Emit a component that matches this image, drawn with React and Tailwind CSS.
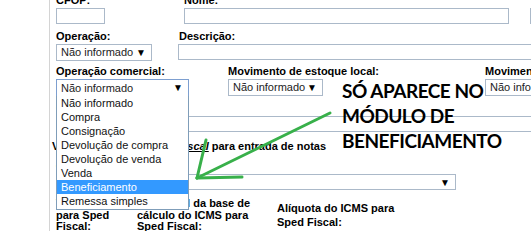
import React from "react";

const label = "block h-[13px] leading-[13px] text-[11px] font-bold text-black whitespace-nowrap";
const box = "mt-[1px] h-[16px] border border-[#abb9c9] bg-white";

function Select({ width, focused, tall }) {
  return (
    <div
      className={`mt-[1px] flex items-center justify-between bg-white pl-[4px] pr-[5px] text-[11px] leading-[13px] text-[#222] border ${
        focused ? "border-[#7d9fd0]" : "border-[#abb9c9]"
      } ${tall ? "h-[18px]" : "h-[17px]"} ${width}`}
    >
      <span className="whitespace-nowrap">Não informado</span>
      <span className="text-[10px] leading-[10px] text-black">▼</span>
    </div>
  );
}

function OptionList() {
  const options = [
    "Não informado",
    "Compra",
    "Consignação",
    "Devolução de compra",
    "Devolução de venda",
    "Venda",
    "Beneficiamento",
    "Remessa simples",
  ];
  return (
    <div className="absolute left-[56px] top-[96px] w-[133px] border border-t-0 border-[#7f9db9] bg-white pb-[1px] text-[11px] text-[#111]">
      {options.map((o) => (
        <div key={o} className={`h-[14px] leading-[14px] pl-[4px] whitespace-nowrap ${o === "Beneficiamento" ? "bg-[#3399ff] text-white" : ""}`}>
          {o}
        </div>
      ))}
    </div>
  );
}

function Annotation() {
  return (
    <>
      <div className="absolute left-[342px] top-[78px] font-['Lato',sans-serif] font-bold text-[19px] leading-[25px] tracking-[-0.5px] text-black whitespace-nowrap">
        <div>SÓ APARECE NO</div>
        <div>MÓDULO DE</div>
        <div>BENEFICIAMENTO</div>
      </div>
      <svg className="absolute left-0 top-0 pointer-events-none" width="531" height="231">
        <g stroke="#38b04a" strokeWidth="3" strokeLinecap="round" fill="none">
          <line x1="330" y1="113" x2="197" y2="178" />
          <line x1="197" y1="178" x2="206" y2="140" />
          <line x1="197" y1="178" x2="242" y2="177" />
        </g>
      </svg>
    </>
  );
}

export default function App() {
  return (
    <div className="relative flex h-[231px] w-[531px] overflow-hidden bg-white font-['Liberation_Sans',Arial,sans-serif]">
      <div className="w-[49px] shrink-0" />
      <div className="flex-1 border-l border-[#d4d4d4] pl-[6px]">
        {/* row 1 */}
        <div className="-mt-[6px] flex">
          <div className="w-[128px] shrink-0">
            <span className={label}>CFOP:</span>
            <div className={`${box} w-[49px]`} />
          </div>
          <div className="w-[346px] shrink-0">
            <span className={label}>Nome:</span>
            <div className={`${box} w-[325px]`} />
          </div>
          <div className="w-[20px] shrink-0">
            <div className="h-[3px] w-[3px] bg-[#f0a040]" />
            <div className="h-[10px]" />
            <div className={`${box} w-[20px]`} />
          </div>
        </div>

        {/* row 2 */}
        <div className="mt-[6px] flex">
          <div className="w-[122px] shrink-0">
            <span className={label}>Operação:</span>
            <Select width="w-[96px]" />
          </div>
          <div className="flex-1">
            <span className={`${label} pl-[1px]`}>Descrição:</span>
            <div className={`${box} w-[360px]`} />
          </div>
        </div>

        {/* row 3 */}
        <div className="mt-[4px] flex">
          <div className="w-[172px] shrink-0">
            <span className={label}>Operação comercial:</span>
            <Select width="w-[133px]" focused tall />
          </div>
          <div className="w-[257px] shrink-0">
            <span className={label}>Movimento de estoque local:</span>
            <Select width="w-[95px]" />
          </div>
          <div className="w-[60px] shrink-0">
            <span className={label}>Movimento de estoque:</span>
            <Select width="w-[95px]" />
          </div>
        </div>

        {/* row under the open list */}
        <div className="mt-[5px]">
          <span className={label}>Observação:</span>
          <div className={`${box} w-[480px]`} />
        </div>

        <div className="mt-[8px] -ml-[4px] h-[13px] leading-[13px] text-[11px] font-bold text-black whitespace-nowrap">
          Vincular CFOP ao Livro <span className="italic underline">Fiscal</span> para entrada de notas
        </div>

        <div className="mt-[7px]">
          <span className={label}>CFOP de entrada:</span>
          <div className="mt-[1px] flex h-[16px] w-[400px] items-center justify-end border border-[#abb9c9] pr-[5px] text-[10px]">
            ▼
          </div>
        </div>

        {/* bottom row */}
        <div className="mt-[8px] flex text-[11px] font-bold text-black">
          <div className="w-[81px] shrink-0 pr-[3px] leading-[11.5px]">Valor do ICMS para Sped Fiscal:</div>
          <div className="w-[140px] shrink-0 pr-[20px] leading-[11.5px]">Valor total da base de cálculo do ICMS para Sped Fiscal:</div>
          <div className="w-[130px] shrink-0 pt-[4px] leading-[13.5px]">Alíquota do ICMS para Sped Fiscal:</div>
        </div>
      </div>

      <OptionList />
      <Annotation />
    </div>
  );
}
